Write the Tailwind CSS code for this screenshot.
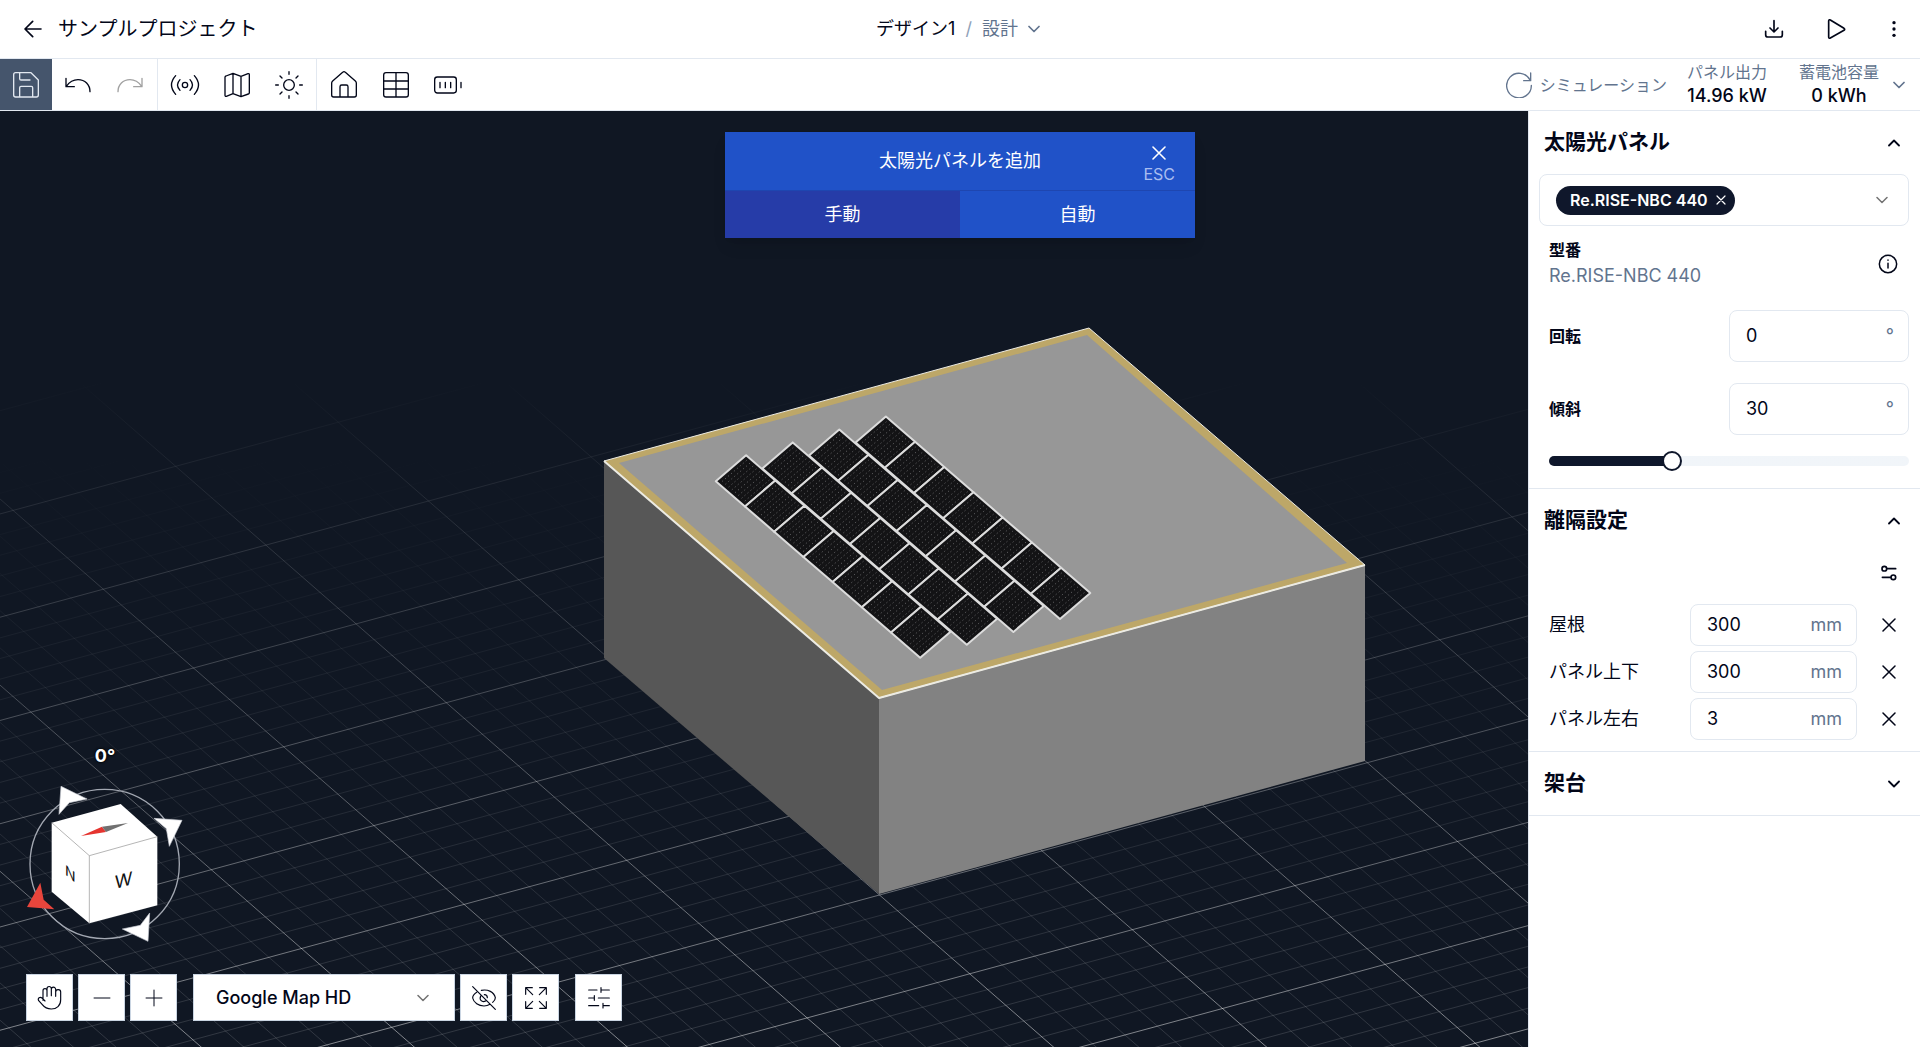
<!DOCTYPE html>
<html lang="ja">
<head>
  <meta charset="UTF-8" />
  <meta name="viewport" content="width=device-width, initial-scale=1.0" />
  <script src="https://cdn.jsdelivr.net/npm/@tailwindcss/browser@4"></script>
  <title>サンプルプロジェクト</title>
</head>
<body class="flex flex-col h-screen overflow-hidden bg-white text-slate-950 text-lg font-['Inter','Noto_Sans_CJK_JP',sans-serif]">

  <!-- Header -->
  <header class="grid grid-cols-[1fr_auto_1fr] items-center h-[59px] shrink-0 border-b border-slate-200 pl-3 pr-4">
    <div class="flex items-center gap-4 pl-3">
      <a href="#" aria-label="戻る">
        <svg class="w-[18px] h-[18px]" viewBox="0 0 54 54" fill="none" stroke="currentColor" stroke-width="5" stroke-linecap="round" stroke-linejoin="round"><path d="M51 27H3M26 4L3 27l23 23" /></svg>
      </a>
      <h1 class="text-xl">サンプルプロジェクト</h1>
    </div>
    <button class="flex items-center gap-2.5">
      <span>デザイン1</span>
      <span class="text-slate-400">/</span>
      <span class="text-slate-500">設計</span>
      <svg class="w-3 h-3 text-slate-500" viewBox="0 0 12 12" fill="none" stroke="currentColor" stroke-width="1.7" stroke-linecap="round" stroke-linejoin="round"><path d="M1 3.5l5 5 5-5" /></svg>
    </button>
    <div class="flex items-center justify-end gap-10">
      <button aria-label="ダウンロード">
        <svg class="w-5 h-5" viewBox="0 0 60 60" fill="none" stroke="currentColor" stroke-width="5" stroke-linecap="round" stroke-linejoin="round"><path d="M5 37v10a7 7 0 0 0 7 7h36a7 7 0 0 0 7-7V37M30 5v34M18 27l12 12 12-12" /></svg>
      </button>
      <button aria-label="再生" class="ml-0.5 -mr-0.5">
        <svg class="w-5 h-5" viewBox="0 0 60 60" fill="none" stroke="currentColor" stroke-width="5" stroke-linejoin="round"><path d="M8 6v48q0 5 5 3l41-23q4-3 0-6L13 3q-5-2-5 3z" /></svg>
      </button>
      <button aria-label="メニュー">
        <svg class="w-5 h-5" viewBox="0 0 60 60" fill="currentColor"><circle cx="30" cy="11" r="5" /><circle cx="30" cy="30" r="5" /><circle cx="30" cy="49" r="5" /></svg>
      </button>
    </div>
  </header>

  <!-- Toolbar -->
  <div class="flex h-[52px] shrink-0 border-b border-slate-200">
    <div class="flex pr-px border-r border-slate-200">
      <button aria-label="保存" class="grid place-items-center w-[52px] bg-slate-600 text-slate-200">
        <svg class="w-[26px] h-[26px] overflow-visible" viewBox="0 0 78 78" fill="none" stroke="currentColor" stroke-width="4" stroke-linejoin="round" stroke-linecap="round"><path d="M8 2h46l22 22v45a6 6 0 0 1-6 6H8a6 6 0 0 1-6-6V8a6 6 0 0 1 6-6zM20 2v18q0 4 4 4h27M20 75V47q0-4 4-4h31q4 0 4 4v28" /></svg>
      </button>
      <button aria-label="元に戻す" class="grid place-items-center w-[52px]">
        <svg class="w-[26px] h-[26px] overflow-visible" viewBox="0 0 78 78" fill="none" stroke="currentColor" stroke-width="4" stroke-linecap="round" stroke-linejoin="round"><path d="M3 19v25h25M4 43C14 29 25 23 39 23c21 0 36 15 36 36" /></svg>
      </button>
      <button aria-label="やり直す" class="grid place-items-center w-[52px] text-neutral-400">
        <svg class="w-[26px] h-[26px] overflow-visible" viewBox="0 0 78 78" fill="none" stroke="currentColor" stroke-width="4" stroke-linecap="round" stroke-linejoin="round"><path d="M75 19v25H50M74 43C64 29 53 23 39 23 18 23 3 38 3 59" /></svg>
      </button>
    </div>
    <div class="flex px-px border-r border-slate-200">
      <button aria-label="センサー" class="grid place-items-center w-[52px]">
        <svg class="w-[26px] h-[26px] overflow-visible" viewBox="0 0 78 78" fill="none" stroke="currentColor" stroke-width="4" stroke-linecap="round"><circle cx="39" cy="39" r="8" /><path d="M24 23q-15 16 0 32M54 23q15 16 0 32M11 11q-25 28 0 56M67 11q25 28 0 56" /></svg>
      </button>
      <button aria-label="地図" class="grid place-items-center w-[52px]">
        <svg class="w-[26px] h-[26px] overflow-visible" viewBox="0 0 78 78" fill="none" stroke="currentColor" stroke-width="4" stroke-linejoin="round"><path d="M6 12L27 4l24 9 21-8q4-1 4 3v54q0 3-3 4l-22 8-24-9-20 8q-4 1-4-3V16q0-3 3-4zM27 4v61M51 13v61" /></svg>
      </button>
      <button aria-label="日照" class="grid place-items-center w-[52px]">
        <svg class="w-[26px] h-[26px] overflow-visible" viewBox="0 0 78 78" fill="none" stroke="currentColor" stroke-width="4" stroke-linecap="round"><circle cx="39" cy="39" r="16" /><path d="M39-1v8M39 71v8M-1 39h8M71 39h8M12 12l6 6M60 60l6 6M12 66l6-6M60 18l6-6" /></svg>
      </button>
    </div>
    <div class="flex px-px">
      <button aria-label="建物" class="grid place-items-center w-[52px]">
        <svg class="w-[26px] h-[26px] overflow-visible" viewBox="0 0 78 78" fill="none" stroke="currentColor" stroke-width="4" stroke-linejoin="round"><path d="M5 27L35 1q4-4 8 0l30 26q3 3 3 6v36a6 6 0 0 1-6 6H8a6 6 0 0 1-6-6V33q0-3 3-6zM27 75V44q0-5 5-5h14q5 0 5 5v31" /></svg>
      </button>
      <button aria-label="パネル" class="grid place-items-center w-[52px]">
        <svg class="w-[26px] h-[26px] overflow-visible" viewBox="0 0 78 78" fill="none" stroke="currentColor" stroke-width="4"><rect x="2" y="2" width="74" height="73" rx="7" /><path d="M2 27h74M2 51h74M39 2v73" /></svg>
      </button>
      <button aria-label="蓄電池" class="grid place-items-center w-[52px]">
        <svg class="w-[26px] h-[26px] overflow-visible" viewBox="0 0 78 78" fill="none" stroke="currentColor" stroke-width="4" stroke-linecap="round"><rect x="-1" y="15" width="65" height="48" rx="8" /><path d="M15 31v16M31 31v16M47 31v16M78 31v16" /></svg>
      </button>
    </div>

    <div class="flex items-center ml-auto pr-[15px] text-slate-500">
      <button class="flex items-center gap-2 text-base">
        <svg class="w-[26px] h-[26px]" viewBox="0 0 78 78" fill="none" stroke="currentColor" stroke-width="4" stroke-linecap="round" stroke-linejoin="round"><path d="M74 3v23H53M72 24A37 37 0 1 0 76 40" /></svg>
        シミュレーション
      </button>
      <dl class="w-20 ml-5 pb-0.5 text-center leading-[23px]">
        <dt class="text-base leading-[23px] whitespace-nowrap">パネル出力</dt>
        <dd class="font-medium text-slate-950 whitespace-nowrap">14.96 kW</dd>
      </dl>
      <dl class="w-20 ml-8 pb-0.5 text-center leading-[23px]">
        <dt class="text-base leading-[23px] whitespace-nowrap">蓄電池容量</dt>
        <dd class="font-medium text-slate-950 whitespace-nowrap">0 kWh</dd>
      </dl>
      <button aria-label="詳細" class="ml-3.5">
        <svg class="w-3 h-3" viewBox="0 0 12 12" fill="none" stroke="currentColor" stroke-width="1.7" stroke-linecap="round" stroke-linejoin="round"><path d="M1 3.5l5 5 5-5" /></svg>
      </button>
    </div>
  </div>

  <div class="flex flex-1 min-h-0">
    <!-- 3D viewport -->
    <main class="relative flex-1 overflow-hidden bg-[#101723]">
      <svg class="absolute inset-0 w-full h-full" viewBox="0 111 1528 936" preserveAspectRatio="xMidYMid slice" fill="none">
        <defs>
          <linearGradient id="fadeMajor" x1="0" y1="380" x2="0" y2="1047" gradientUnits="userSpaceOnUse">
            <stop offset="0" stop-color="#fff" stop-opacity="0" />
            <stop offset="0.35" stop-color="#fff" stop-opacity="0.17" />
            <stop offset="1" stop-color="#fff" stop-opacity="0.48" />
          </linearGradient>
          <linearGradient id="fadeMinor" x1="0" y1="450" x2="0" y2="1047" gradientUnits="userSpaceOnUse">
            <stop offset="0" stop-color="#fff" stop-opacity="0" />
            <stop offset="1" stop-color="#fff" stop-opacity="0.14" />
          </linearGradient>
        </defs>
        <path id="minor" stroke="url(#fadeMinor)" />
        <path id="major" stroke="url(#fadeMajor)" />

        <!-- building -->
        <path d="M604 461L879 698V894L604 658z" fill="#575757" />
        <path d="M879 698l486-133v196L879 894z" fill="#828282" />
        <path d="M604 461l485-133 276 237-486 133z" fill="#bda768" stroke="#ecebe3" stroke-width="1" />
        <path d="M604 461l275 237 486-133" stroke="#ecebe3" stroke-width="2" stroke-linejoin="round" />
        <path d="M619 463l468-128 260 228-465 127z" fill="#979797" />
        <g id="panels" stroke-linejoin="round"></g>
      </svg>

      <!-- add-panel dialog, centred on the window rather than on the viewport -->
      <section class="absolute top-[21px] left-[50vw] -translate-x-1/2 w-[470px] bg-[#2052c8] text-white shadow-lg">
        <div class="relative flex items-center justify-center h-[59px] border-b border-[#1e46b0]">
          <h2>太陽光パネルを追加</h2>
          <button class="absolute right-5 top-3.5 flex flex-col items-center gap-1 text-base leading-5 text-[#a9bdf0]">
            <svg class="w-3.5 h-3.5 text-white" viewBox="0 0 14 14" stroke="currentColor" stroke-width="1.6" stroke-linecap="round"><path d="M1 1l12 12M13 1L1 13" /></svg>
            ESC
          </button>
        </div>
        <div class="grid grid-cols-2 h-[47px]">
          <button class="bg-[#263ca8]">手動</button>
          <button>自動</button>
        </div>
      </section>

      <!-- view cube -->
      <div class="absolute left-5 bottom-[97px] w-[170px] flex flex-col items-center">
        <output class="font-bold leading-6 mb-3 text-white [text-shadow:0_0_2px_#000,0_0_3px_#000]">0°</output>
        <svg class="w-[170px] h-[170px]" viewBox="60 180 510 510" fill="none">
          <circle cx="314" cy="432" r="224" stroke="#a3a8b2" stroke-width="4" />
          <path d="M155 308L362 252l110 98v206L268 610 155 515z" fill="#fff" />
          <path d="M155 308l113 99 204-57M268 407v203" stroke="#8f8f8f" stroke-width="2" />
          <path d="M243 348l63-28 12 16z" fill="#e5342f" />
          <path d="M306 320l78-11-66 27z" fill="#707070" />
          <path d="M183 199l78 38-53 11-31 35z" fill="#fff" stroke="#c9ccd3" stroke-width="2" />
          <path d="M462 295l84 6-38 78-9-53z" fill="#fff" stroke="#c9ccd3" stroke-width="2" />
          <path d="M367 627l54-11 28-37-5 85z" fill="#fff" stroke="#c9ccd3" stroke-width="2" />
          <path d="M121 488l10 51 32 29-82-7z" fill="#e8453c" />
          <g fill="#111" font-family="Inter, sans-serif" text-anchor="middle">
            <text transform="translate(371 500) skewY(-15)" font-size="54">W</text>
            <text transform="translate(211 476) skewY(40)" font-size="42">N</text>
          </g>
        </svg>
      </div>

      <!-- bottom controls -->
      <div class="absolute left-[26px] bottom-[26px] flex gap-[5px] h-[47px]">
        <button aria-label="移動" class="grid place-items-center w-[47px] bg-white border border-slate-300">
          <svg class="w-[26px] h-[26px]" viewBox="0 0 78 78" fill="none" stroke="currentColor" stroke-width="3.5" stroke-linecap="round" stroke-linejoin="round"><path d="M18 46V17a6 6 0 0 1 12 0v17M30 17v-6a6.500 6.500 0 0 1 13 0v21M43 13a6.500 6.500 0 0 1 13 0v21M56 21a7 7 0 0 1 15 1v22c0 18-12 28-28 28-14 0-21-5-27-13L5 47c-4-7 4-13 10-8l9 9" /></svg>
        </button>
        <button aria-label="縮小" class="grid place-items-center w-[47px] bg-white border border-slate-300">
          <svg class="w-[26px] h-[26px]" viewBox="0 0 78 78" fill="none" stroke="currentColor" stroke-width="3"><path d="M14 39h50" /></svg>
        </button>
        <button aria-label="拡大" class="grid place-items-center w-[47px] bg-white border border-slate-300">
          <svg class="w-[26px] h-[26px]" viewBox="0 0 78 78" fill="none" stroke="currentColor" stroke-width="3"><path d="M14 39h50M39 14v50" /></svg>
        </button>
        <div class="relative w-[262px] ml-[11px]">
          <select aria-label="地図" class="appearance-none w-full h-full pl-[22px] bg-white border border-slate-300 font-medium">
            <option>Google Map HD</option>
          </select>
          <svg class="absolute right-[26px] top-[18px] w-3 h-3 text-neutral-500 pointer-events-none" viewBox="0 0 12 12" fill="none" stroke="currentColor" stroke-width="1.500" stroke-linecap="round" stroke-linejoin="round"><path d="M1 3.5l5 5 5-5" /></svg>
        </div>
        <button aria-label="非表示" class="grid place-items-center w-[47px] bg-white border border-slate-300">
          <svg class="w-[26px] h-[26px]" viewBox="0 0 78 78" fill="none" stroke="currentColor" stroke-width="3.5" stroke-linecap="round"><path d="M5 5l68 68M17 22C9 27 5 33 5 39c3 14 18 24 34 24 7 0 13-2 18-5M31 16c20-4 38 5 42 22 0 5-3 10-8 14M29 33c-5 12 4 20 15 15M40 29c5 0 9 4 9 9" /></svg>
        </button>
        <button aria-label="全画面" class="grid place-items-center w-[47px] bg-white border border-slate-300">
          <svg class="w-[26px] h-[26px]" viewBox="0 0 78 78" fill="none" stroke="currentColor" stroke-width="3.5" stroke-linecap="round" stroke-linejoin="round"><path d="M8 28V8h20M8 8l21 21M50 8h20v20M70 8L49 29M8 50v20h20M8 70l21-21M70 50v20H50M70 70L49 49" /></svg>
        </button>
        <button aria-label="設定" class="grid place-items-center w-[47px] ml-[11px] bg-white border border-slate-300">
          <svg class="w-[26px] h-[26px]" viewBox="0 0 78 78" fill="none" stroke="currentColor" stroke-width="3.5" stroke-linecap="round"><path d="M8 15h25M45 15h25M45 8v14M8 39h17M37 39h33M25 32v14M8 62h30M51 62h19M51 55v14" /></svg>
        </button>
      </div>
    </main>

    <!-- Properties -->
    <aside class="w-[392px] shrink-0 overflow-hidden border-l border-slate-200">
      <section class="pb-[17px] pl-2.5 pr-[11px] border-b border-slate-200">
        <button class="flex items-center justify-between w-full h-[63px] pl-[5px] pr-[9px]">
          <h2 class="text-[21px] font-bold">太陽光パネル</h2>
          <svg class="w-3 h-3" viewBox="0 0 12 12" fill="none" stroke="currentColor" stroke-width="1.8" stroke-linecap="round" stroke-linejoin="round"><path d="M1 8.500l5-5 5 5" /></svg>
        </button>
        <div class="flex items-center h-[52px] pl-4 pr-5 border border-slate-200 rounded-lg">
          <span class="flex items-center gap-2 h-[29px] pl-3.5 pr-[9px] rounded-full bg-slate-900 text-white text-base font-semibold">
            Re.RISE-NBC 440
            <button aria-label="削除"><svg class="w-2.5 h-2.5" viewBox="0 0 10 10" stroke="currentColor" stroke-width="1.2" stroke-linecap="round"><path d="M1 1l8 8M9 1L1 9" /></svg></button>
          </span>
          <button aria-label="開く" class="ml-auto"><svg class="w-3 h-3 text-neutral-500" viewBox="0 0 12 12" fill="none" stroke="currentColor" stroke-width="1.500" stroke-linecap="round" stroke-linejoin="round"><path d="M1 3.5l5 5 5-5" /></svg></button>
        </div>
        <div class="flex items-center justify-between mt-3 pl-2.5 pr-[11px]">
          <div>
            <h3 class="text-base leading-6 font-bold">型番</h3>
            <p class="leading-7 text-slate-500">Re.RISE-NBC 440</p>
          </div>
          <button aria-label="情報">
            <svg class="w-5 h-5" viewBox="0 0 60 60" fill="none" stroke="currentColor" stroke-width="4.500" stroke-linecap="round"><circle cx="30" cy="30" r="26" /><path d="M30 28v14M30 18v1" /></svg>
          </button>
        </div>
        <div class="flex items-center justify-between mt-5 pl-2.5">
          <label for="rotation" class="text-base font-bold">回転</label>
          <div class="flex items-center w-[180px] h-[52px] pl-4 pr-3.5 border border-slate-200 rounded-lg">
            <input id="rotation" type="text" value="0" class="flex-1 min-w-0 outline-none" />
            <span class="text-slate-500">°</span>
          </div>
        </div>
        <div class="flex items-center justify-between mt-[21px] pl-2.5">
          <label for="tilt" class="text-base font-bold">傾斜</label>
          <div class="flex items-center w-[180px] h-[52px] pl-4 pr-3.5 border border-slate-200 rounded-lg">
            <input id="tilt" type="text" value="30" class="flex-1 min-w-0 outline-none" />
            <span class="text-slate-500">°</span>
          </div>
        </div>
        <div class="flex mt-4 pl-2.5 h-5 items-center">
          <input aria-label="傾斜" type="range" min="0" max="90" value="30" class="appearance-none w-full h-2.5 rounded-full bg-linear-to-r from-slate-900 from-34% to-slate-100 to-34% [&::-webkit-slider-thumb]:appearance-none [&::-webkit-slider-thumb]:w-5 [&::-webkit-slider-thumb]:h-5 [&::-webkit-slider-thumb]:rounded-full [&::-webkit-slider-thumb]:bg-white [&::-webkit-slider-thumb]:border-2 [&::-webkit-slider-thumb]:border-slate-900" />
        </div>
      </section>

      <section class="pb-[11px] pl-2.5 pr-[11px] border-b border-slate-200">
        <button class="flex items-center justify-between w-full h-[63px] pl-[5px] pr-[9px]">
          <h2 class="text-[21px] font-bold">離隔設定</h2>
          <svg class="w-3 h-3" viewBox="0 0 12 12" fill="none" stroke="currentColor" stroke-width="1.8" stroke-linecap="round" stroke-linejoin="round"><path d="M1 8.500l5-5 5 5" /></svg>
        </button>
        <div class="flex justify-end items-center h-[42px] pr-3">
          <button aria-label="詳細設定">
            <svg class="w-4 h-4" viewBox="0 0 48 48" fill="none" stroke="currentColor" stroke-width="5" stroke-linecap="round"><circle cx="10" cy="11" r="7" /><path d="M19 11h25M4 37h24" /><circle cx="37" cy="37" r="7" /></svg>
          </button>
        </div>
        <div class="flex flex-col gap-[5px] mt-2.5 pl-2.5">
          <div class="flex items-center">
            <label for="roof" class="flex-1">屋根</label>
            <div class="flex items-center w-[167px] h-[42px] pl-4 pr-3.5 border border-slate-200 rounded-lg">
              <input id="roof" type="text" value="300" class="flex-1 min-w-0 outline-none" />
              <span class="text-slate-500">mm</span>
            </div>
            <button aria-label="屋根を削除" class="grid place-items-center w-[52px]"><svg class="w-3.5 h-3.5 ml-3" viewBox="0 0 14 14" stroke="currentColor" stroke-width="1.500" stroke-linecap="round"><path d="M1 1l12 12M13 1L1 13" /></svg></button>
          </div>
          <div class="flex items-center">
            <label for="vertical" class="flex-1">パネル上下</label>
            <div class="flex items-center w-[167px] h-[42px] pl-4 pr-3.5 border border-slate-200 rounded-lg">
              <input id="vertical" type="text" value="300" class="flex-1 min-w-0 outline-none" />
              <span class="text-slate-500">mm</span>
            </div>
            <button aria-label="パネル上下を削除" class="grid place-items-center w-[52px]"><svg class="w-3.5 h-3.5 ml-3" viewBox="0 0 14 14" stroke="currentColor" stroke-width="1.500" stroke-linecap="round"><path d="M1 1l12 12M13 1L1 13" /></svg></button>
          </div>
          <div class="flex items-center">
            <label for="horizontal" class="flex-1">パネル左右</label>
            <div class="flex items-center w-[167px] h-[42px] pl-4 pr-3.5 border border-slate-200 rounded-lg">
              <input id="horizontal" type="text" value="3" class="flex-1 min-w-0 outline-none" />
              <span class="text-slate-500">mm</span>
            </div>
            <button aria-label="パネル左右を削除" class="grid place-items-center w-[52px]"><svg class="w-3.5 h-3.5 ml-3" viewBox="0 0 14 14" stroke="currentColor" stroke-width="1.500" stroke-linecap="round"><path d="M1 1l12 12M13 1L1 13" /></svg></button>
          </div>
        </div>
      </section>

      <section class="pl-2.5 pr-[11px] border-b border-slate-200">
        <button class="flex items-center justify-between w-full h-[63px] pl-[5px] pr-[9px]">
          <h2 class="text-[21px] font-bold">架台</h2>
          <svg class="w-3 h-3" viewBox="0 0 12 12" fill="none" stroke="currentColor" stroke-width="1.8" stroke-linecap="round" stroke-linejoin="round"><path d="M1 3.5l5 5 5-5" /></svg>
        </button>
      </section>
    </aside>
  </div>

  <script>
    // ground grid: a and b are the two major axes in screen space
    const origin = [879.5, 895];
    const a = [162.6, -44.1];
    const b = [90.2, 78.8];
    const div = 5;
    const at = (m, n) => (origin[0] + m * a[0] + n * b[0]) + ' ' + (origin[1] + m * a[1] + n * b[1]);

    let major = '';
    let minor = '';
    for (let i = -12 * div; i <= 12 * div; i++) {
      const k = i / div;
      const d = 'M' + at(k, -14) + 'L' + at(k, 14) + 'M' + at(-14, k) + 'L' + at(14, k);
      if (i % div === 0) major += d;
      else minor += d;
    }
    document.getElementById('major').setAttribute('d', major);
    document.getElementById('minor').setAttribute('d', minor);

    // solar modules: 4 columns of 7
    const step = [29.2, 25.2];
    const up = [30.3, -26];
    const col = [46.6, -12.9];
    let html = '';
    for (let c = 3; c >= 0; c--) {
      for (let r = 0; r < 7; r++) {
        const x = 715.8 + c * col[0] + r * step[0];
        const y = 481.3 + c * col[1] + r * step[1];
        html += `<path d="M${x} ${y}l${up[0]} ${up[1]}l${step[0]} ${step[1]}l${-up[0]} ${-up[1]}z" fill="#131315" stroke="#dcdcdc" stroke-width="2"/>`;
        let cells = '';
        for (let i = 1; i < 9; i++) {
          const t = i / 9;
          cells += `M${x + step[0] * t + up[0] * 0.1} ${y + step[1] * t + up[1] * 0.1}l${up[0] * 0.82} ${up[1] * 0.82}`;
        }
        html += `<path d="${cells}" stroke="#5c5c5e" stroke-width="1" stroke-dasharray="1.3 2.6"/>`;
      }
    }
    document.getElementById('panels').innerHTML = html;
  </script>
</body>
</html>
